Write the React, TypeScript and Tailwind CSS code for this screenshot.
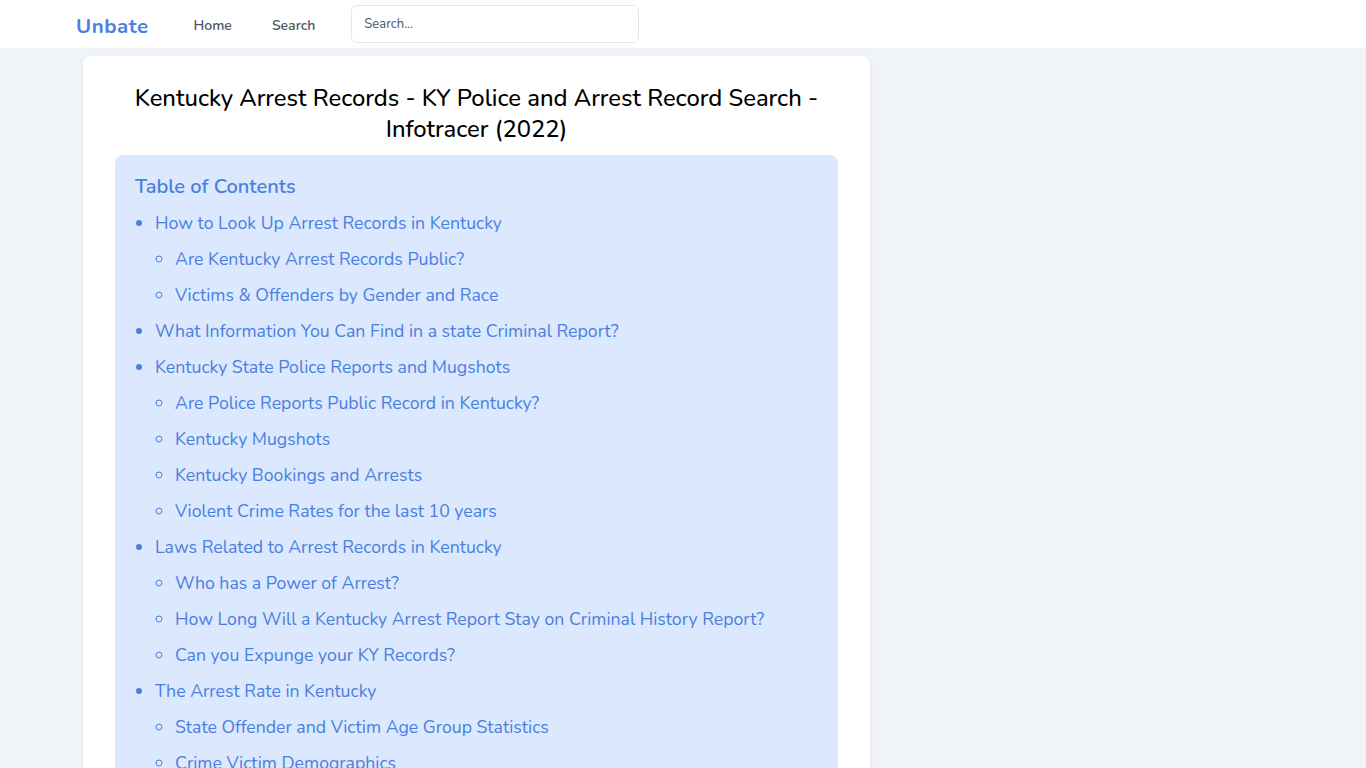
import React from "react";

type Item = { title: string; children?: string[] };

const toc: Item[] = [
  {
    title: "How to Look Up Arrest Records in Kentucky",
    children: ["Are Kentucky Arrest Records Public?", "Victims & Offenders by Gender and Race"],
  },
  { title: "What Information You Can Find in a state Criminal Report?" },
  {
    title: "Kentucky State Police Reports and Mugshots",
    children: [
      "Are Police Reports Public Record in Kentucky?",
      "Kentucky Mugshots",
      "Kentucky Bookings and Arrests",
      "Violent Crime Rates for the last 10 years",
    ],
  },
  {
    title: "Laws Related to Arrest Records in Kentucky",
    children: [
      "Who has a Power of Arrest?",
      "How Long Will a Kentucky Arrest Report Stay on Criminal History Report?",
      "Can you Expunge your KY Records?",
    ],
  },
  {
    title: "The Arrest Rate in Kentucky",
    children: ["State Offender and Victim Age Group Statistics", "Crime Victim Demographics"],
  },
];

export default function App() {
  return (
    <div className="min-h-screen bg-[#f0f3f8] font-['Nunito','Open_Sans','Noto_Sans',sans-serif]">
      <header className="h-12 bg-white">
        <div className="flex h-full items-center pl-[76px]">
          <a className="mt-1 text-[20.5px] font-bold tracking-wide text-[#4a7fe0]">Unbate</a>
          <nav className="mt-1 ml-[45px] flex gap-10 text-sm font-semibold text-gray-600">
            <a>Home</a>
            <a>Search</a>
          </nav>
          <input
            className="ml-9 h-[38px] w-[288px] rounded-md border border-gray-200 px-3 text-[13px] text-gray-700 placeholder:text-gray-600 outline-none"
            placeholder="Search..."
          />
        </div>
      </header>

      <main className="pl-[83px] pt-2">
        <article className="w-[787px] rounded-lg bg-white px-8 pt-[27px] pb-8 shadow-sm">
          <h1 className="text-center text-[23.8px] leading-[31px] font-medium text-black">
            Kentucky Arrest Records - KY Police and Arrest Record Search - Infotracer (2022)
          </h1>
          <div className="mt-[10px] rounded-lg bg-[#dbe8fd] px-5 pt-[18px] pb-4">
            <h2 className="text-xl font-semibold text-[#4a7fe0]">Table of Contents</h2>
            <ul className="mt-[4px] list-disc pl-5 text-[17.7px] text-[#4a7fe0] marker:text-[#4a7fe0]">
              {toc.map((item) => (
                <li key={item.title} className="leading-9">
                  {item.title}
                  {item.children && (
                    <ul className="list-[circle] pl-5">
                      {item.children.map((c) => (
                        <li key={c} className="leading-9">{c}</li>
                      ))}
                    </ul>
                  )}
                </li>
              ))}
            </ul>
          </div>
        </article>
      </main>
    </div>
  );
}
